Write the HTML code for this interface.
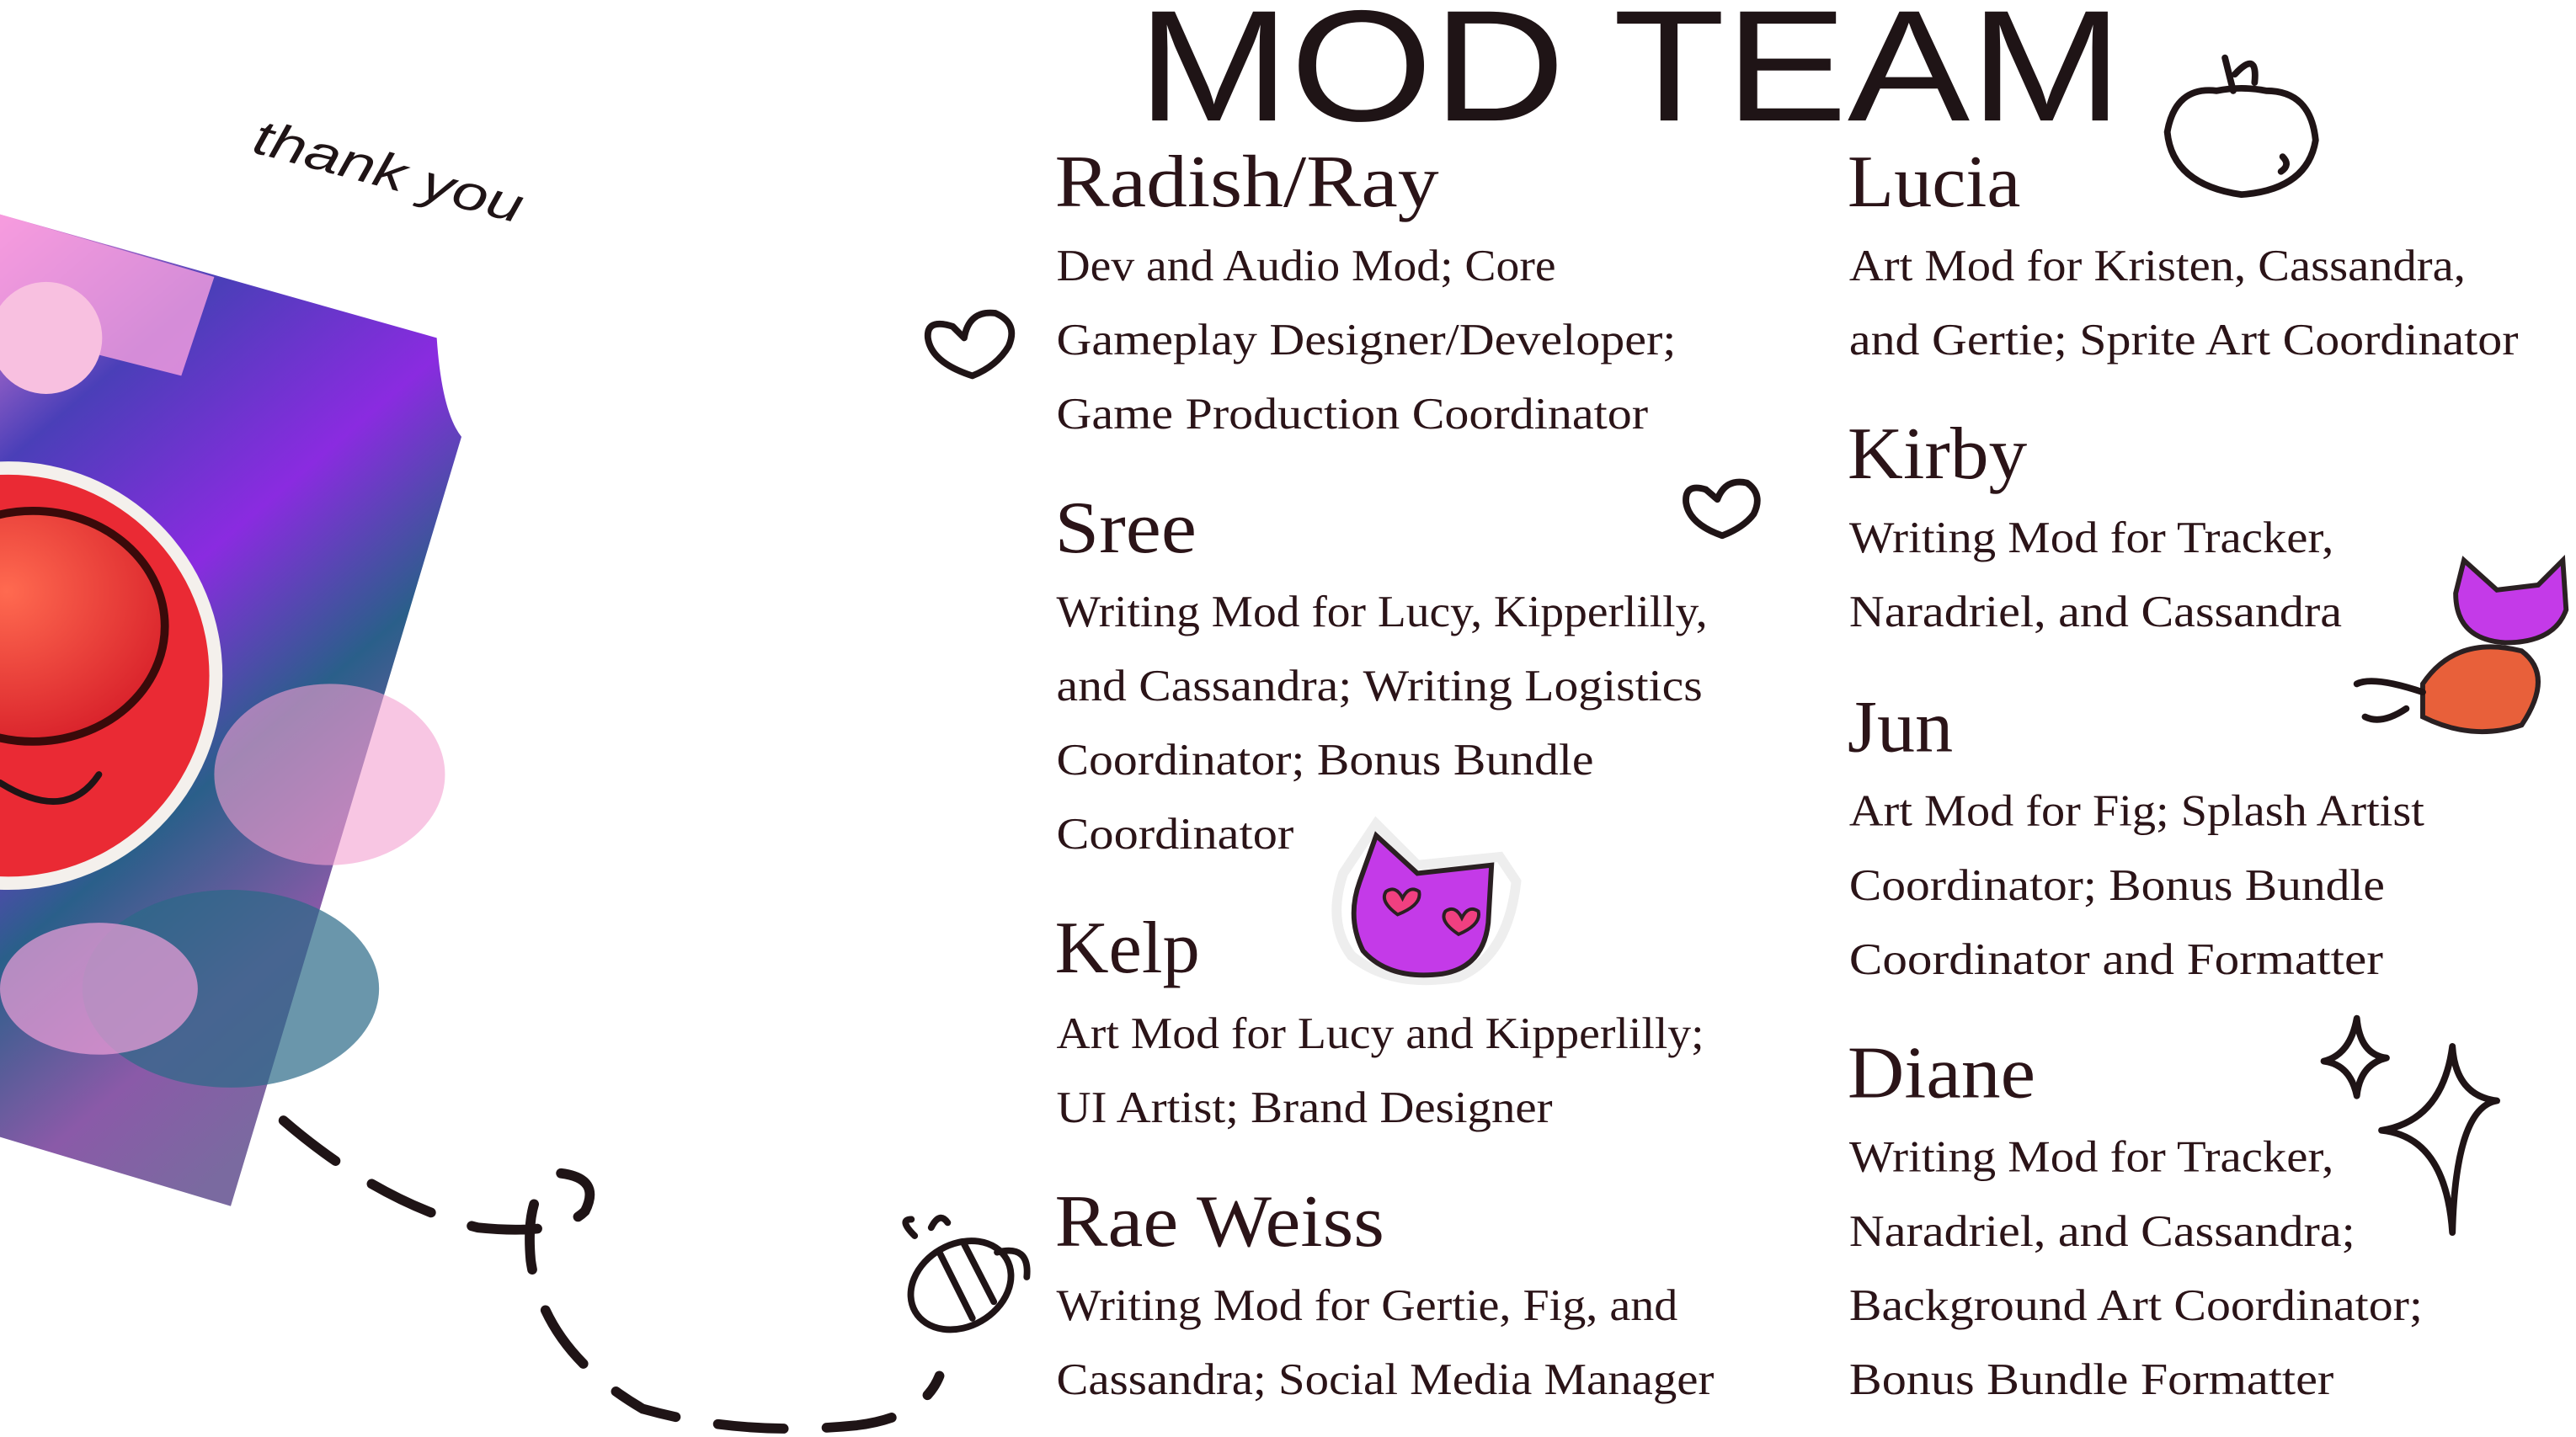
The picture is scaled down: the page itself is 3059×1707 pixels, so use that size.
<!DOCTYPE html>
<html><head><meta charset="utf-8"><style>
html,body{margin:0;padding:0;background:#fff;width:3059px;height:1707px;overflow:hidden}
svg{display:block}
.n{font-family:"Liberation Serif",serif;font-size:45px;fill:#2b1418}
.b{font-family:"Liberation Serif",serif;font-size:27px;fill:#2b1418}
.ink{fill:none;stroke:#1f1416;stroke-width:4;stroke-linecap:round;stroke-linejoin:round}
</style></head><body>
<svg width="3059" height="1707" viewBox="0 0 1563 872" xmlns="http://www.w3.org/2000/svg">
<defs>
<linearGradient id="g1" x1="0" y1="0" x2="0.4" y2="1">
<stop offset="0" stop-color="#f58ad8"/><stop offset="0.22" stop-color="#4a3fb8"/><stop offset="0.45" stop-color="#8a2be0"/><stop offset="0.65" stop-color="#2a5f8a"/><stop offset="0.85" stop-color="#8a5aa8"/><stop offset="1" stop-color="#7a6aa0"/>
</linearGradient>
<radialGradient id="r1" cx="0.4" cy="0.35" r="0.7"><stop offset="0" stop-color="#ff6a50"/><stop offset="1" stop-color="#d8202a"/></radialGradient>
</defs>
<path d="M0,130 L265,205 Q268,250 280,265 L140,732 L0,690 Z" fill="url(#g1)"/>
<path d="M0,130 L130,168 L110,228 L0,200 Z" fill="#f7a0e0" opacity="0.8"/>
<circle cx="28" cy="205" r="34" fill="#f8c0e0"/>
<ellipse cx="200" cy="470" rx="70" ry="55" fill="#f3a0d0" opacity="0.6"/>
<ellipse cx="140" cy="600" rx="90" ry="60" fill="#2b6a88" opacity="0.7"/>
<ellipse cx="60" cy="600" rx="60" ry="40" fill="#f0a0d8" opacity="0.7"/>
<circle cx="5" cy="410" r="130" fill="#f4f0ec"/>
<circle cx="5" cy="410" r="122" fill="#ea2a34"/>
<ellipse cx="20" cy="380" rx="80" ry="70" fill="url(#r1)" stroke="#3a0a0a" stroke-width="5"/>
<path d="M0,475 Q40,500 60,470" class="ink" stroke="#3a0a0a"/>
<text x="152" y="92" transform="rotate(15 152 92)" font-family="Liberation Sans,sans-serif" font-size="30" font-style="italic" fill="#1f1416" textLength="168" lengthAdjust="spacingAndGlyphs">thank you</text>
<text x="690" y="73" font-family="Liberation Sans,sans-serif" font-size="96" fill="#1f1416" textLength="598" lengthAdjust="spacingAndGlyphs">MOD TEAM</text>
<path class="ink" d="M1345,55 Q1320,52 1315,80 Q1318,112 1360,118 Q1400,115 1405,85 Q1402,55 1375,55 Q1360,52 1345,55 M1355,55 L1350,35 M1356,45 Q1370,30 1368,50 M1385,95 Q1390,100 1384,104"/>
<path class="ink" d="M590,228 Q565,220 563,205 Q562,193 578,198 L585,205 Q588,188 604,190 Q618,196 612,210 Q605,222 590,228 Z"/>
<path class="ink" d="M1045,325 Q1025,318 1023,305 Q1022,293 1035,297 L1042,303 Q1047,290 1060,293 Q1070,300 1064,312 Q1058,320 1045,325 Z"/>
<g transform="translate(805,495)">
<path d="M10,35 L30,5 L55,30 L105,25 L115,40 Q110,85 80,98 Q40,105 15,85 Q0,65 10,35 Z" fill="#fff" stroke="#eee" stroke-width="6"/>
<path d="M20,40 L30,12 L55,35 L100,30 L98,65 Q95,92 70,96 Q38,100 22,82 Q12,62 20,40 Z" fill="#c43ae8" stroke="#2a2022" stroke-width="3"/>
<path d="M43,60 Q32,52 36,46 Q42,42 46,50 Q50,42 56,46 Q58,54 43,60Z M80,72 Q68,64 72,58 Q78,54 82,62 Q86,54 92,58 Q94,66 80,72Z" fill="#f04080" stroke="#2a2022" stroke-width="2"/>
</g>
<g transform="translate(1430,340)">
<path d="M60,20 L65,0 L85,18 L110,15 L125,0 L127,30 Q120,50 90,50 Q60,48 60,20Z" fill="#c43ae8" stroke="#2a2022" stroke-width="3"/>
<path d="M40,75 Q60,45 100,55 Q120,70 100,100 Q70,110 40,95 Z" fill="#e8603a" stroke="#2a2022" stroke-width="3"/>
<path class="ink" d="M40,80 Q10,70 0,75 M30,90 Q15,100 5,95" stroke-width="2"/>
</g>
<path class="ink" d="M1430,618 Q1432,640 1448,642 Q1432,646 1430,665 Q1426,646 1410,644 Q1426,640 1430,618Z"/>
<path class="ink" d="M1488,635 Q1490,665 1515,668 Q1490,672 1488,748 Q1484,690 1445,686 Q1482,680 1488,635Z" stroke-width="5"/>
<g transform="translate(545,740)">
<ellipse cx="38" cy="40" rx="32" ry="25" transform="rotate(-30 38 40)" class="ink"/>
<path class="ink" d="M25,20 L45,60 M40,15 L58,50 M10,10 Q0,0 8,0 M20,5 Q25,-5 30,2 M60,20 Q80,15 78,35"/>
</g>
<path d="M172,680 Q230,730 290,745 Q340,750 355,735 Q365,715 340,712 Q318,720 322,765 Q330,820 390,855 Q450,872 520,865 Q560,860 570,835" fill="none" stroke="#1f1416" stroke-width="6" stroke-dasharray="40 26" stroke-linecap="round"/>
<text class="n" x="640" y="125" textLength="233" lengthAdjust="spacingAndGlyphs">Radish/Ray</text>
<text class="b" x="641" y="170" textLength="303" lengthAdjust="spacingAndGlyphs">Dev and Audio Mod; Core</text>
<text class="b" x="641" y="215" textLength="376" lengthAdjust="spacingAndGlyphs">Gameplay Designer/Developer;</text>
<text class="b" x="641" y="260" textLength="359" lengthAdjust="spacingAndGlyphs">Game Production Coordinator</text>
<text class="n" x="640" y="335" textLength="86" lengthAdjust="spacingAndGlyphs">Sree</text>
<text class="b" x="641" y="380" textLength="395" lengthAdjust="spacingAndGlyphs">Writing Mod for Lucy, Kipperlilly,</text>
<text class="b" x="641" y="425" textLength="392" lengthAdjust="spacingAndGlyphs">and Cassandra; Writing Logistics</text>
<text class="b" x="641" y="470" textLength="326" lengthAdjust="spacingAndGlyphs">Coordinator; Bonus Bundle</text>
<text class="b" x="641" y="515" textLength="144" lengthAdjust="spacingAndGlyphs">Coordinator</text>
<text class="n" x="640" y="590" textLength="88" lengthAdjust="spacingAndGlyphs">Kelp</text>
<text class="b" x="641" y="636" textLength="393" lengthAdjust="spacingAndGlyphs">Art Mod for Lucy and Kipperlilly;</text>
<text class="b" x="641" y="681" textLength="301" lengthAdjust="spacingAndGlyphs">UI Artist; Brand Designer</text>
<text class="n" x="640" y="756" textLength="200" lengthAdjust="spacingAndGlyphs">Rae Weiss</text>
<text class="b" x="641" y="801" textLength="377" lengthAdjust="spacingAndGlyphs">Writing Mod for Gertie, Fig, and</text>
<text class="b" x="641" y="846" textLength="399" lengthAdjust="spacingAndGlyphs">Cassandra; Social Media Manager</text>
<text class="n" x="1121" y="125" textLength="105" lengthAdjust="spacingAndGlyphs">Lucia</text>
<text class="b" x="1122" y="170" textLength="374" lengthAdjust="spacingAndGlyphs">Art Mod for Kristen, Cassandra,</text>
<text class="b" x="1122" y="215" textLength="406" lengthAdjust="spacingAndGlyphs">and Gertie; Sprite Art Coordinator</text>
<text class="n" x="1121" y="290" textLength="109" lengthAdjust="spacingAndGlyphs">Kirby</text>
<text class="b" x="1122" y="335" textLength="294" lengthAdjust="spacingAndGlyphs">Writing Mod for Tracker,</text>
<text class="b" x="1122" y="380" textLength="299" lengthAdjust="spacingAndGlyphs">Naradriel, and Cassandra</text>
<text class="n" x="1121" y="456" textLength="64" lengthAdjust="spacingAndGlyphs">Jun</text>
<text class="b" x="1122" y="501" textLength="349" lengthAdjust="spacingAndGlyphs">Art Mod for Fig; Splash Artist</text>
<text class="b" x="1122" y="546" textLength="325" lengthAdjust="spacingAndGlyphs">Coordinator; Bonus Bundle</text>
<text class="b" x="1122" y="591" textLength="324" lengthAdjust="spacingAndGlyphs">Coordinator and Formatter</text>
<text class="n" x="1121" y="666" textLength="114" lengthAdjust="spacingAndGlyphs">Diane</text>
<text class="b" x="1122" y="711" textLength="294" lengthAdjust="spacingAndGlyphs">Writing Mod for Tracker,</text>
<text class="b" x="1122" y="756" textLength="307" lengthAdjust="spacingAndGlyphs">Naradriel, and Cassandra;</text>
<text class="b" x="1122" y="801" textLength="348" lengthAdjust="spacingAndGlyphs">Background Art Coordinator;</text>
<text class="b" x="1122" y="846" textLength="294" lengthAdjust="spacingAndGlyphs">Bonus Bundle Formatter</text>
</svg>
</body></html>
